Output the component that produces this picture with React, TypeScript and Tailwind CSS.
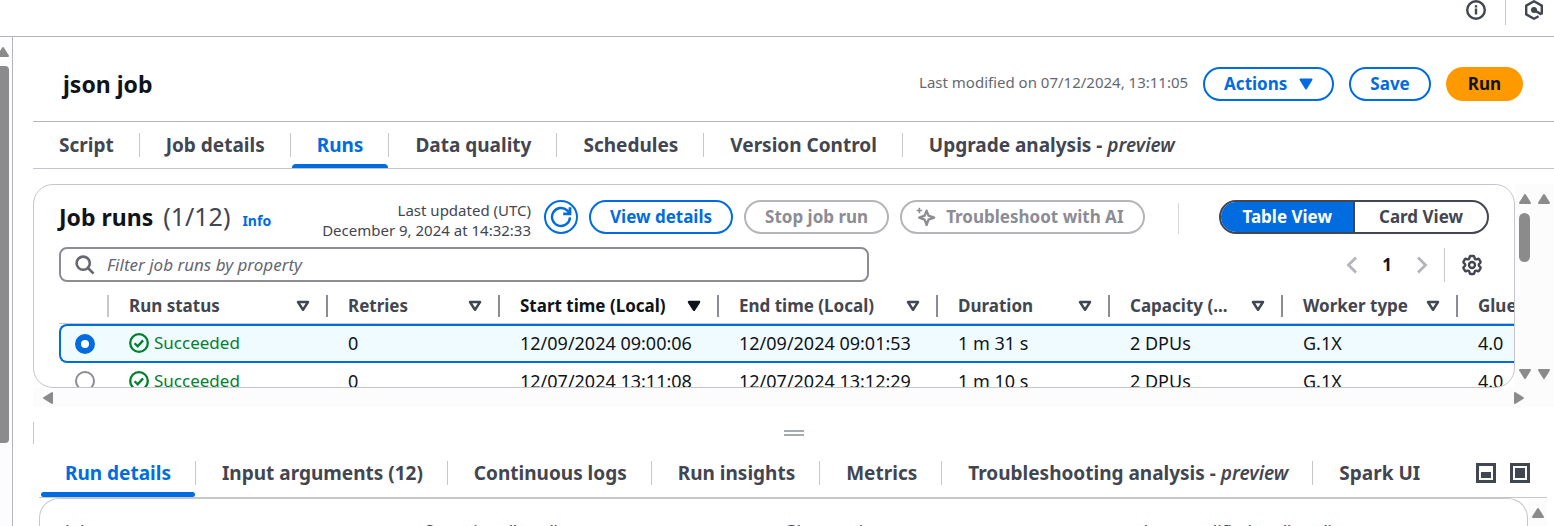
import { useState } from "react";
import type { ReactNode } from "react";
import { HiOutlineCog6Tooth } from "react-icons/hi2";

type Tab = { id: string; label: string; preview?: boolean };

const jobTabs: Tab[] = [
  { id: "script", label: "Script" },
  { id: "details", label: "Job details" },
  { id: "runs", label: "Runs" },
  { id: "quality", label: "Data quality" },
  { id: "schedules", label: "Schedules" },
  { id: "version", label: "Version Control" },
  { id: "upgrade", label: "Upgrade analysis", preview: true },
];

const runTabs: Tab[] = [
  { id: "details", label: "Run details" },
  { id: "arguments", label: "Input arguments (12)" },
  { id: "logs", label: "Continuous logs" },
  { id: "insights", label: "Run insights" },
  { id: "metrics", label: "Metrics" },
  { id: "troubleshooting", label: "Troubleshooting analysis", preview: true },
  { id: "spark", label: "Spark UI" },
];

const columns = [
  "Run status",
  "Retries",
  "Start time (Local)",
  "End time (Local)",
  "Duration",
  "Capacity (...",
  "Worker type",
  "Glue version",
];

const runs = [
  ["0", "12/09/2024 09:00:06", "12/09/2024 09:01:53", "1 m 31 s", "2 DPUs", "G.1X", "4.0"],
  ["0", "12/07/2024 13:11:08", "12/07/2024 13:12:29", "1 m 10 s", "2 DPUs", "G.1X", "4.0"],
];

function InfoIcon() {
  return (
    <svg width="20" height="20" viewBox="0 0 20 20" fill="none" stroke="#424650" strokeWidth="2.4">
      <circle cx="10" cy="10" r="8.8" />
      <path d="M10 8.6v5.8M10 5.2v2.2" strokeWidth="2.4" />
    </svg>
  );
}

function HexagonIcon() {
  return (
    <svg width="20" height="20" viewBox="0 0 20 20" fill="none" stroke="#424650" strokeWidth="2.4">
      <path d="M17.8 14.4V5.6L10 1.3 2.2 5.6v8.8L10 18.7l4.6-2.5" strokeLinejoin="round" />
      <circle cx="10" cy="10" r="3" fill="#424650" stroke="none" />
      <path d="M10.5 10.3l7 4" strokeWidth="2.6" />
    </svg>
  );
}

function RefreshIcon() {
  return (
    <svg width="22" height="22" viewBox="0 0 22 22" fill="none" stroke="#006ce0" strokeWidth="2.4" className="shrink-0">
      <path d="M20 11.4a9 9 0 1 1-2.6-6.8l2.2 2.6" />
      <path d="M20 1.2v6.6h-6.8" strokeWidth="2.8" />
    </svg>
  );
}

function SparkleIcon() {
  return (
    <svg width="20" height="20" viewBox="0 0 20 20" fill="none" stroke="#8c8c94" strokeWidth="2.3" strokeLinejoin="round">
      <path d="M10.6 3.6l1.9 5.1 5.6 2-5.6 2-1.9 5.3-2-5.3-5.4-2 5.4-2z" />
      <path d="M3.4.8v5.4M.7 3.5h5.4" strokeWidth="1.6" />
    </svg>
  );
}

function SuccessIcon() {
  return (
    <svg width="20" height="20" viewBox="0 0 20 20" fill="none" stroke="#00802f" strokeWidth="2.3">
      <circle cx="10" cy="10" r="8.8" />
      <path d="M5.6 10.2l3.1 3.1 5.4-5.9" />
    </svg>
  );
}

function SearchIcon() {
  return (
    <svg width="20" height="20" viewBox="0 0 20 20" fill="none" stroke="#656871" strokeWidth="2.6">
      <circle cx="8.2" cy="8.2" r="6.6" />
      <path d="M13 13l5.6 5.6" />
    </svg>
  );
}

function SortIcon({ active }: { active: boolean }) {
  return (
    <svg width="14" height="12" viewBox="0 0 14 12" strokeWidth="2.5" strokeLinejoin="round" className="shrink-0">
      <path d="M2 2h10l-5 7.8z" fill={active ? "#0f141a" : "none"} stroke={active ? "#0f141a" : "#424650"} />
    </svg>
  );
}

function Chevron({ flip }: { flip?: boolean }) {
  return (
    <svg width="12" height="18" viewBox="0 0 12 18" fill="none" stroke="#b4b4bb" strokeWidth="2.8">
      <path d={flip ? "M2 1.5L9.5 9 2 16.5" : "M10 1.5L2.5 9 10 16.5"} />
    </svg>
  );
}

const arrowPaths = {
  up: "M7 3l5 8H2z",
  down: "M7 11l5-8H2z",
  left: "M3 7l8-5v10z",
  right: "M11 7L3 2v10z",
};

function ScrollArrow({ to }: { to: keyof typeof arrowPaths }) {
  return (
    <svg width="14" height="14" viewBox="0 0 14 14" fill="#8b8b8b" stroke="#8b8b8b" strokeWidth="2" strokeLinejoin="round" className="shrink-0">
      <path d={arrowPaths[to]} />
    </svg>
  );
}

function PillButton({ children, disabled }: { children: ReactNode; disabled?: boolean }) {
  return (
    <button
      type="button"
      disabled={disabled}
      className="flex h-[34px] shrink-0 items-center rounded-full border-2 border-[#006ce0] px-[19px] text-[17px] font-bold whitespace-nowrap text-[#006ce0] disabled:border-[#b4b4bb] disabled:text-[#8c8c94]"
    >
      {children}
    </button>
  );
}

function Tabs({
  tabs,
  active,
  onSelect,
  label,
  dense,
}: {
  tabs: Tab[];
  active: string;
  onSelect: (id: string) => void;
  label: string;
  dense?: boolean;
}) {
  return (
    <div role="tablist" aria-label={label} className="flex h-full items-stretch">
      {tabs.map((tab, i) => {
        const on = tab.id === active;
        return (
          <div key={tab.id} className="flex items-center">
            {i > 0 && <span className="h-6 w-px bg-[#c6c6cd]" />}
            <button
              type="button"
              role="tab"
              aria-selected={on}
              onClick={() => onSelect(tab.id)}
              className={`relative h-full pl-[26px] text-[19px] font-bold whitespace-nowrap ${dense ? "pt-0.5 pr-6" : "pr-[25px]"} ${on ? "text-[#006ce0]" : "text-[#424650]"}`}
            >
              {tab.label}
              {tab.preview && (
                <>
                  {" - "}
                  <em className="font-semibold">preview</em>
                </>
              )}
              {on && (
                <span
                  className={
                    dense
                      ? "absolute right-0 bottom-0 left-0.5 h-[5px] rounded-full bg-[#006ce0]"
                      : "absolute right-0 bottom-0 left-px h-1 rounded-t bg-[#006ce0]"
                  }
                />
              )}
            </button>
          </div>
        );
      })}
    </div>
  );
}

function RunsTable() {
  const [selected, setSelected] = useState(0);
  return (
    <table className="w-full min-w-[1571px] table-fixed border-separate border-spacing-0 text-left">
      <colgroup>
        <col className="w-[50px]" />
        <col className="w-[219px]" />
        <col className="w-[172px]" />
        <col className="w-[219px]" />
        <col className="w-[219px]" />
        <col className="w-[172px]" />
        <col className="w-[173px]" />
        <col className="w-[175px]" />
        <col className="w-[172px]" />
      </colgroup>
      <thead>
        <tr className="h-[35px]">
          <th aria-label="Selection" className="border-b border-[#c6c6cd] p-0">
            <span className="ml-auto block h-[22px] w-0.5 bg-[#c6c6cd]" />
          </th>
          {columns.map((name) => {
            const sorted = name === "Start time (Local)";
            return (
              <th key={name} aria-sort={sorted ? "descending" : "none"} className="border-b border-[#c6c6cd] p-0">
                <div className="flex items-center pl-5">
                  <span className={`flex-1 text-[17px] font-bold whitespace-nowrap ${sorted ? "text-[#0f141a]" : "text-[#424650]"}`}>
                    {name}
                  </span>
                  <SortIcon active={sorted} />
                  <span className="ml-4 h-[22px] w-0.5 bg-[#8c8c94]" />
                </div>
              </th>
            );
          })}
        </tr>
      </thead>
      <tbody>
        {runs.map((run, r) => {
          const on = r === selected;
          const edge = on ? "h-[39px] border-y-2 border-[#006ce0] bg-[#f0fbff]" : "h-[37px]";
          return (
            <tr key={run[1]}>
              <td className={on ? `${edge} rounded-l-lg border-l-2 p-0 pl-3.5` : `${edge} p-0 pb-0.5 pl-4`}>
                <input
                  type="radio"
                  name="run"
                  aria-label={`Select run started ${run[1]}`}
                  checked={on}
                  onChange={() => setSelected(r)}
                  className="block size-5 appearance-none rounded-full border-2 border-[#8c8c94] bg-white checked:border-[6px] checked:border-[#006ce0]"
                />
              </td>
              <td className={`${edge} p-0 pb-0.5 pl-5`}>
                <span className="flex items-center gap-[5px] text-[17px] leading-6 text-[#00802f]">
                  <SuccessIcon />
                  Succeeded
                </span>
              </td>
              {run.map((value, i) => (
                <td key={i} className={`${edge} p-0 pb-0.5 pl-5 text-lg leading-6 whitespace-nowrap text-[#0f141a]`}>
                  {value}
                </td>
              ))}
            </tr>
          );
        })}
      </tbody>
    </table>
  );
}

function JobRunsPanel() {
  return (
    <section className="h-[204px] min-w-0 flex-1 overflow-hidden rounded-[20px] border border-[#c6c6cd] bg-white pt-[15px] pl-[25px]">
      <div className="flex items-start pr-[25px]">
        <div className="flex h-[34px] items-baseline">
          <h2 className="text-[23px] leading-8 font-bold whitespace-nowrap text-[#0f141a]">
            Job runs <span className="ml-1 text-[25px] font-normal text-[#424650]">(1/12)</span>
          </h2>
          <a href="#info" className="ml-3 text-sm font-bold text-[#006ce0]">
            Info
          </a>
        </div>
        <p className="ml-[51px] shrink-0 text-right text-[15px] leading-5 text-[#424650]">
          Last updated (UTC)
          <br />
          December 9, 2024 at 14:32:33
        </p>
        <div className="ml-[13px] flex gap-[11px]">
          <button
            type="button"
            aria-label="Refresh"
            className="flex size-[34px] shrink-0 items-center justify-center rounded-full border-2 border-[#006ce0]"
          >
            <RefreshIcon />
          </button>
          <PillButton>View details</PillButton>
          <PillButton disabled>Stop job run</PillButton>
          <button
            type="button"
            disabled
            className="flex h-[34px] shrink-0 items-center gap-2.5 rounded-full border-2 border-[#b4b4bb] pr-[19px] pl-3.5 text-[17px] font-bold whitespace-nowrap text-[#8c8c94]"
          >
            <SparkleIcon />
            Troubleshoot with AI
          </button>
        </div>
        <div className="ml-auto flex items-start">
          <span className="mt-[3px] mr-10 h-[31px] w-px bg-[#d5d5da]" />
          <div role="group" aria-label="View" className="flex h-[34px] overflow-hidden rounded-full border-2 border-[#424650] text-[17px] font-bold whitespace-nowrap">
            <button type="button" aria-pressed="true" className="border-r-2 border-[#424650] bg-[#006ce0] px-[21px] text-white">
              Table View
            </button>
            <button type="button" aria-pressed="false" className="px-6 text-[#424650]">
              Card View
            </button>
          </div>
        </div>
      </div>

      <div className="mt-[7px] flex items-center justify-between pr-[30px]">
        <label className="flex h-[35px] w-[810px] items-center gap-3 rounded-lg border-2 border-[#8c8c94] pl-3.5">
          <SearchIcon />
          <input
            type="text"
            aria-label="Filter job runs"
            placeholder="Filter job runs by property"
            className="min-w-0 flex-1 text-[17px] outline-none placeholder:text-[#656871] placeholder:italic"
          />
        </label>
        <div className="flex items-center">
          <button type="button" aria-label="Previous page" disabled>
            <Chevron />
          </button>
          <button type="button" aria-current="page" className="mx-6 text-[17px] font-bold text-[#0f141a]">
            1
          </button>
          <button type="button" aria-label="Next page" disabled>
            <Chevron flip />
          </button>
          <span className="mr-[15px] ml-4 h-[34px] w-px bg-[#c6c6cd]" />
          <button type="button" aria-label="Preferences">
            <HiOutlineCog6Tooth className="size-6 text-[#424650]" strokeWidth={2.4} />
          </button>
        </div>
      </div>

      <div className="mt-[7px] overflow-hidden">
        <RunsTable />
      </div>
    </section>
  );
}

export default function App() {
  const [jobTab, setJobTab] = useState("runs");
  const [runTab, setRunTab] = useState("details");

  return (
    <div className="flex h-screen flex-col overflow-hidden bg-white font-['Noto_Sans','Open_Sans',sans-serif] text-[#0f141a]">
      <header className="flex h-[37px] shrink-0 items-start justify-end border-b border-[#b4b4bb] pr-2.5">
        <button type="button" aria-label="Information">
          <InfoIcon />
        </button>
        <span className="mr-[18px] ml-[19px] h-[25px] w-px bg-[#c6c6cd]" />
        <button type="button" aria-label="Amazon Q">
          <HexagonIcon />
        </button>
      </header>

      <div className="flex min-h-0 flex-1">
        <div className="flex w-[13px] shrink-0 flex-col items-end border-r border-[#b4b4bb] bg-[#fcfcfc] pt-2 pr-0.5">
          <ScrollArrow to="up" />
          <span className="mt-[7px] mr-px h-[377px] w-[9px] rounded-r bg-[#8b8b8b]" />
        </div>

        <main className="flex min-w-0 flex-1 flex-col pl-5">
          <div className="flex h-[85px] shrink-0 items-center border-b border-[#b4b4bb] pt-2.5 pr-[31px] pl-[30px]">
            <h1 className="text-[23px] font-bold">json job</h1>
            <p className="ml-auto pb-1 text-[15px] text-[#656871]">Last modified on 07/12/2024, 13:11:05</p>
            <div className="ml-[15px] flex gap-[15px]">
              <PillButton>
                Actions
                <svg width="14" height="12" viewBox="0 0 14 12" className="ml-3" fill="#006ce0" stroke="#006ce0" strokeWidth="2" strokeLinejoin="round">
                  <path d="M1.5 1.5h11L7 10.5z" />
                </svg>
              </PillButton>
              <PillButton>Save</PillButton>
              <button type="button" className="h-[34px] rounded-full bg-[#ff9900] px-[22px] text-[17px] font-bold text-[#0f141a]">
                Run
              </button>
            </div>
          </div>

          <nav className="h-[47px] shrink-0 border-b border-[#c6c6cd]">
            <Tabs tabs={jobTabs} active={jobTab} onSelect={setJobTab} label="Job" />
          </nav>

          <div className="mt-[15px] flex shrink-0">
            <JobRunsPanel />
            <div className="flex w-[39px] shrink-0 bg-[#fcfcfc]">
              <div className="flex flex-1 flex-col items-center pt-2 pb-[7px]">
                <ScrollArrow to="up" />
                <span className="mt-[7px] h-[49px] w-[11px] rounded-full bg-[#8b8b8b]" />
                <span className="mt-auto flex">
                  <ScrollArrow to="down" />
                </span>
              </div>
              <div className="flex flex-1 flex-col items-center justify-between pt-2 pb-[7px]">
                <ScrollArrow to="up" />
                <ScrollArrow to="down" />
              </div>
            </div>
          </div>
          <div className="flex h-[19px] shrink-0 items-center justify-between bg-[#fcfcfc] pr-7 pl-2">
            <ScrollArrow to="left" />
            <ScrollArrow to="right" />
          </div>

          <div role="separator" aria-orientation="horizontal" className="mt-[15px] flex h-[22px] shrink-0 flex-col items-center justify-center gap-0.5 border-l border-[#c6c6cd]">
            <span className="h-0.5 w-5 bg-[#a3adaf]" />
            <span className="h-0.5 w-5 bg-[#a3adaf]" />
          </div>

          <div className="flex min-h-0 flex-1 flex-col pr-[7px] pl-1.5">
            <div className="mt-1 flex h-[50px] shrink-0 items-stretch border-b border-[#c6c6cd] pr-[17px]">
              <Tabs tabs={runTabs} active={runTab} onSelect={setRunTab} label="Run" dense />
              <div className="ml-auto flex items-center gap-3.5">
                <button type="button" aria-label="Half-height panel">
                  <svg width="20" height="20" viewBox="0 0 20 20">
                    <rect x="1.5" y="1.5" width="17" height="17" fill="none" stroke="#424650" strokeWidth="3" />
                    <rect x="5" y="9" width="10" height="6" fill="#424650" />
                  </svg>
                </button>
                <button type="button" aria-label="Full-height panel">
                  <svg width="20" height="20" viewBox="0 0 20 20">
                    <rect x="1.5" y="1.5" width="17" height="17" fill="none" stroke="#424650" strokeWidth="3" />
                    <rect x="5" y="5" width="10" height="10" fill="#424650" />
                  </svg>
                </button>
              </div>
            </div>
            <div className="flex min-h-0 flex-1 overflow-hidden">
              <section className="grid min-w-0 flex-1 grid-cols-4 self-start rounded-t-[20px] border border-b-0 border-[#c6c6cd] pt-5 pr-6 pl-[25px] text-[17px] leading-6 text-[#424650]">
                <span>Job name</span>
                <span>Start time (Local)</span>
                <span>Glue version</span>
                <span>Last modified on (Local)</span>
              </section>
              <div className="flex w-[19px] shrink-0 justify-center bg-[#fcfcfc] pt-2">
                <ScrollArrow to="up" />
              </div>
            </div>
          </div>
        </main>
      </div>
    </div>
  );
}
